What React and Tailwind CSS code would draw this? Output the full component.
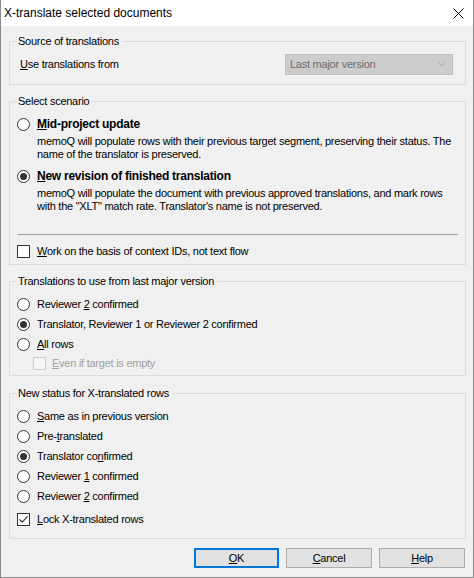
import React from "react";

function Radio({ checked }) {
  return (
    <svg width="13" height="13" viewBox="0 0 13 13" className="shrink-0">
      <circle cx="6.5" cy="6.5" r="6" fill="#ffffff" stroke="#333333" strokeWidth="1" />
      {checked && <circle cx="6.5" cy="6.5" r="3.5" fill="#333333" />}
    </svg>
  );
}

function Check({ checked, disabled }) {
  return (
    <svg width="13" height="13" viewBox="0 0 13 13" className="shrink-0">
      <rect
        x="0.5"
        y="0.5"
        width="12"
        height="12"
        fill={disabled ? "#f7f7f7" : "#ffffff"}
        stroke={disabled ? "#cccccc" : "#333333"}
        strokeWidth="1"
      />
      {checked && (
        <path d="M2.5 6.5 L5.2 9.2 L10.5 3.3" fill="none" stroke="#333333" strokeWidth="1.2" />
      )}
    </svg>
  );
}

function U({ children }) {
  return <span className="underline underline-offset-[1px]">{children}</span>;
}

function RadioRow({ checked, children, bold }) {
  return (
    <div className="flex h-[16px] items-center gap-[7px]">
      <Radio checked={checked} />
      <span className={bold ? "font-bold text-[12px]" : ""}>{children}</span>
    </div>
  );
}

function Group({ title, className, children }) {
  return (
    <fieldset className={"ml-[8px] w-[457px] border border-[#dcdcdc] px-[7px] " + className}>
      <legend className="pl-[1px] pr-[3px] leading-[13px]">{title}</legend>
      {children}
    </fieldset>
  );
}

export default function App() {
  return (
    <div className="h-[578px] w-[474px] overflow-hidden border-x border-b border-[#8a8a8a] bg-[#f0f0f0] font-['Liberation_Sans',Arial,sans-serif] text-[11px] leading-[13px] tracking-[-0.25px] text-black">
      <div className="flex h-[26px] items-center justify-between bg-white">
        <span className="pl-[3px] text-[12px] tracking-normal">X-translate selected documents</span>
        <svg width="11" height="11" viewBox="0 0 11 11" className="mr-[9px]">
          <path d="M0.5 0.5 L10.5 10.5 M10.5 0.5 L0.5 10.5" stroke="#000000" strokeWidth="1" />
        </svg>
      </div>

      <div className="pt-[9px]">
        <Group title="Source of translations" className="pb-[9px]">
          <div className="mt-[6px] flex h-[21px] items-center justify-between pl-[3px] pr-[5px]">
            <span>
              <U>U</U>se translations from
            </span>
            <div className="flex h-[21px] w-[168px] items-center justify-between border border-[#bfbfbf] bg-[#cccccc] pl-[4px] pr-[6px] text-[#6d6d6d]">
              <span>Last major version</span>
              <svg width="8" height="5" viewBox="0 0 8 5">
                <path d="M0.5 0.5 L4 4 L7.5 0.5" fill="none" stroke="#a8a8a8" strokeWidth="1" />
              </svg>
            </div>
          </div>
        </Group>

        <Group title="Select scenario" className="mt-[10px] pb-[5px]">
          <div className="mt-[8px]">
            <RadioRow bold>
              <U>M</U>id-project update
            </RadioRow>
            <p className="mt-[3px] pl-[20px]">
              memoQ will populate rows with their previous target segment, preserving their status. The name of the translator is preserved.
            </p>
            <div className="mt-[7px]">
              <RadioRow bold checked>
                <U>N</U>ew revision of finished translation
              </RadioRow>
            </div>
            <p className="mt-[3px] pl-[20px]">
              memoQ will populate the document with previous approved translations, and mark rows with the "XLT" match rate. Translator's name is not preserved.
            </p>
            <div className="ml-[1px] mt-[21px] h-px bg-[#a0a0a0]" />
            <div className="mt-[8px] flex h-[16px] items-center gap-[7px]">
              <Check />
              <span>
                <U>W</U>ork on the basis of context IDs, not text flow
              </span>
            </div>
          </div>
        </Group>

        <Group title="Translations to use from last major version" className="mt-[10px] pb-[4px]">
          <div className="mt-[8px] flex flex-col gap-[4px]">
            <RadioRow>
              Reviewer <U>2</U> confirmed
            </RadioRow>
            <RadioRow checked>Translator, Reviewer 1 or Reviewer 2 confirmed</RadioRow>
            <RadioRow>
              <U>A</U>ll rows
            </RadioRow>
          </div>
          <div className="ml-[16px] mt-[3px] flex h-[16px] items-center gap-[6px] text-[#a0a0a0]">
            <Check disabled />
            <span>
              <U>E</U>ven if target is empty
            </span>
          </div>
        </Group>

        <Group title="New status for X-translated rows" className="mt-[11px] pb-[11px]">
          <div className="mt-[8px] flex flex-col gap-[4px]">
            <RadioRow>
              <U>S</U>ame as in previous version
            </RadioRow>
            <RadioRow>
              Pre-<U>t</U>ranslated
            </RadioRow>
            <RadioRow checked>
              Translator co<U>n</U>firmed
            </RadioRow>
            <RadioRow>
              Reviewer <U>1</U> confirmed
            </RadioRow>
            <RadioRow>
              Reviewer <U>2</U> confirmed
            </RadioRow>
          </div>
          <div className="mt-[7px] flex h-[16px] items-center gap-[7px]">
            <Check checked />
            <span>
              <U>L</U>ock X-translated rows
            </span>
          </div>
        </Group>

        <div className="mt-[9px] flex justify-end gap-[7px] pr-[8px]">
          <button className="h-[20px] w-[85px] border-2 border-[#0078d7] bg-[#e1e1e1] text-[11px]">
            <U>O</U>K
          </button>
          <button className="h-[20px] w-[86px] border border-[#adadad] bg-[#e1e1e1] text-[11px]">
            <U>C</U>ancel
          </button>
          <button className="h-[20px] w-[86px] border border-[#adadad] bg-[#e1e1e1] text-[11px]">
            <U>H</U>elp
          </button>
        </div>
      </div>
    </div>
  );
}
